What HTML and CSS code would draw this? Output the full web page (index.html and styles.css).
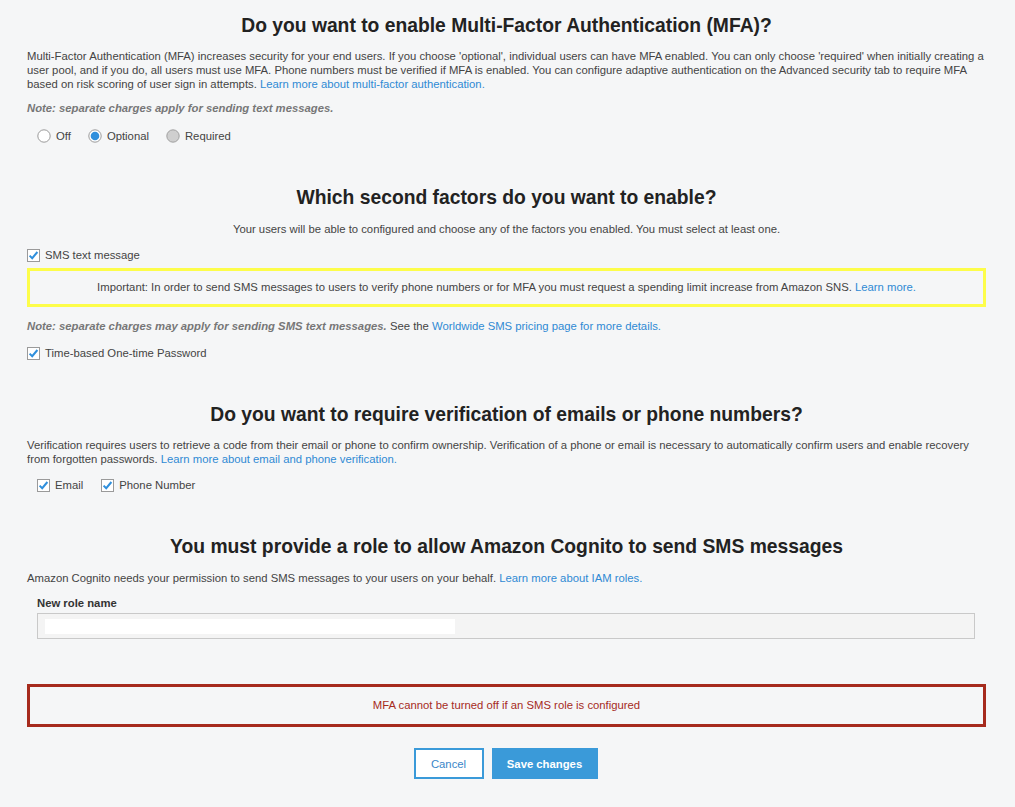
FILE: index.html
```html
<!DOCTYPE html>
<html lang="en">
<head>
    <meta charset="UTF-8">
    <meta name="viewport" content="width=device-width, initial-scale=1.0">
    <title>MFA and verifications</title>
    <link rel="stylesheet" href="styles.css">
</head>
<body>

    <div class="main-content">

        <!-- MFA -->
        <h2 class="first">Do you want to enable Multi-Factor Authentication (MFA)?</h2>
        <p class="desc">Multi-Factor Authentication (MFA) increases security for your end users. If you choose 'optional', individual users can have MFA enabled. You can only choose 'required' when initially creating a user pool, and if you do, all users must use MFA. Phone numbers must be verified if MFA is enabled. You can configure adaptive authentication on the Advanced security tab to require MFA based on risk scoring of user sign in attempts. <a href="#">Learn more about multi-factor authentication.</a></p>
        <p class="note"><em>Note: separate charges apply for sending text messages.</em></p>

        <div class="options indent">
            <label class="option">
                <svg class="radio" width="14" height="14" viewBox="0 0 14 14"><circle cx="7" cy="7" r="6.2" fill="#fff" stroke="#8e8e8e" stroke-width="0.9"/></svg>
                Off
            </label>
            <label class="option">
                <svg class="radio" width="14" height="14" viewBox="0 0 14 14"><circle cx="7" cy="7" r="6.2" fill="#fff" stroke="#8e8e8e" stroke-width="0.9"/><circle cx="7" cy="7" r="4.3" fill="#2f8fdc"/></svg>
                Optional
            </label>
            <label class="option">
                <svg class="radio" width="14" height="14" viewBox="0 0 14 14"><circle cx="7" cy="7" r="6.2" fill="#cfcfcf" stroke="#9a9a9a" stroke-width="0.9"/></svg>
                Required
            </label>
        </div>

        <!-- Second factors -->
        <h2>Which second factors do you want to enable?</h2>
        <p class="center sub">Your users will be able to configured and choose any of the factors you enabled. You must select at least one.</p>

        <label class="option check-row">
            <svg class="check" width="13" height="13" viewBox="0 0 13 13"><rect x="0.5" y="0.5" width="12" height="12" fill="#fff" stroke="#9a9a9a"/><path d="M2.6 6.6 L5.2 9.2 L10.4 3" fill="none" stroke="#2f8fdc" stroke-width="2"/></svg>
            SMS text message
        </label>

        <div class="warning">
            Important: In order to send SMS messages to users to verify phone numbers or for MFA you must request a spending limit increase from Amazon SNS. <a href="#">Learn more.</a>
        </div>

        <p class="note"><em>Note: separate charges may apply for sending SMS text messages.</em> See the <a href="#">Worldwide SMS pricing page for more details.</a></p>

        <label class="option check-row">
            <svg class="check" width="13" height="13" viewBox="0 0 13 13"><rect x="0.5" y="0.5" width="12" height="12" fill="#fff" stroke="#9a9a9a"/><path d="M2.6 6.6 L5.2 9.2 L10.4 3" fill="none" stroke="#2f8fdc" stroke-width="2"/></svg>
            Time-based One-time Password
        </label>

        <!-- Verification -->
        <h2>Do you want to require verification of emails or phone numbers?</h2>
        <p class="desc">Verification requires users to retrieve a code from their email or phone to confirm ownership. Verification of a phone or email is necessary to automatically confirm users and enable recovery from forgotten passwords. <a href="#">Learn more about email and phone verification.</a></p>

        <div class="options indent verify">
            <label class="option">
                <svg class="check" width="13" height="13" viewBox="0 0 13 13"><rect x="0.5" y="0.5" width="12" height="12" fill="#fff" stroke="#9a9a9a"/><path d="M2.6 6.6 L5.2 9.2 L10.4 3" fill="none" stroke="#2f8fdc" stroke-width="2"/></svg>
                Email
            </label>
            <label class="option">
                <svg class="check" width="13" height="13" viewBox="0 0 13 13"><rect x="0.5" y="0.5" width="12" height="12" fill="#fff" stroke="#9a9a9a"/><path d="M2.6 6.6 L5.2 9.2 L10.4 3" fill="none" stroke="#2f8fdc" stroke-width="2"/></svg>
                Phone Number
            </label>
        </div>

        <!-- SMS role -->
        <h2>You must provide a role to allow Amazon Cognito to send SMS messages</h2>
        <p class="desc role-desc">Amazon Cognito needs your permission to send SMS messages to your users on your behalf. <a href="#">Learn more about IAM roles.</a></p>

        <div class="form-group indent">
            <label class="field-label" for="roleName">New role name</label>
            <div class="role-input" id="roleName"><span class="role-value"></span></div>
        </div>

        <div class="error-box">MFA cannot be turned off if an SMS role is configured</div>

        <div class="actions">
            <button class="btn-cancel">Cancel</button>
            <button class="btn-save">Save changes</button>
        </div>

    </div>

</body>
</html>
```

FILE: styles.css
```css
body {
    font-family: "Liberation Sans", Arial, Helvetica, sans-serif;
    margin: 0;
    padding: 0;
    background-color: #f5f6f7;
    color: #444;
    font-size: 11.3px;
}

a {
    color: #2f8ad4;
    text-decoration: none;
}

.main-content {
    padding: 0 29px 0 27px;
}

h2 {
    margin: 42px 0 0;
    font-size: 19.3px;
    line-height: 24px;
    text-align: center;
    color: #222;
    font-weight: bold;
}

h2.first {
    margin-top: 14px;
}

p {
    margin: 0;
    line-height: 14px;
}

.desc {
    margin-top: 11px;
}

.center {
    text-align: center;
}

.sub {
    margin-top: 12px;
}

.note {
    margin-top: 10px;
    color: #444;
}

.note em {
    font-weight: bold;
    color: #777;
}

.indent {
    padding-left: 10px;
}

.options {
    display: flex;
    margin-top: 13px;
}

.option {
    display: flex;
    align-items: center;
    height: 16px;
    line-height: 16px;
    color: #444;
}

.options .option {
    margin-right: 17px;
}

.radio {
    margin-right: 5px;
}

.check {
    margin-right: 5px;
}

.check-row {
    margin-top: 11px;
}

.warning {
    margin-top: 5px;
    border: 3px solid #fdfd4a;
    height: 33px;
    line-height: 33px;
    text-align: center;
    color: #444;
}

.warning + .note {
    margin-top: 12px;
}

.note + .check-row {
    margin-top: 12px;
}

.verify {
    margin-top: 11px;
}

.verify .option {
    margin-right: 18px;
}

.role-desc {
    margin-top: 12px;
}

.form-group {
    margin-top: 11px;
    margin-right: 11px;
    display: flex;
    flex-direction: column;
}

.field-label {
    font-weight: bold;
    color: #333;
    line-height: 14px;
}

.role-input {
    margin-top: 3px;
    height: 26px;
    border: 1px solid #c9c9c9;
    background-color: #f4f4f4;
    padding: 5px 0 0 7px;
    box-sizing: border-box;
}

.role-value {
    display: block;
    width: 410px;
    height: 15px;
    background-color: #fff;
}

.error-box {
    margin-top: 45px;
    border: 3px solid #a62b1d;
    height: 37px;
    line-height: 37px;
    text-align: center;
    color: #a62b1d;
}

.actions {
    margin-top: 21px;
    display: flex;
    justify-content: center;
    gap: 8px;
    padding-right: 2px;
}

.actions button {
    height: 31px;
    font-family: "Liberation Sans", Arial, sans-serif;
    font-size: 11.3px;
    cursor: pointer;
}

.btn-cancel {
    width: 70px;
    background-color: #fff;
    border: 2px solid #3a9ad9;
    color: #3a86c8;
}

.btn-save {
    width: 106px;
    background-color: #3a9ad9;
    border: none;
    color: #fff;
    font-weight: bold;
}
```
